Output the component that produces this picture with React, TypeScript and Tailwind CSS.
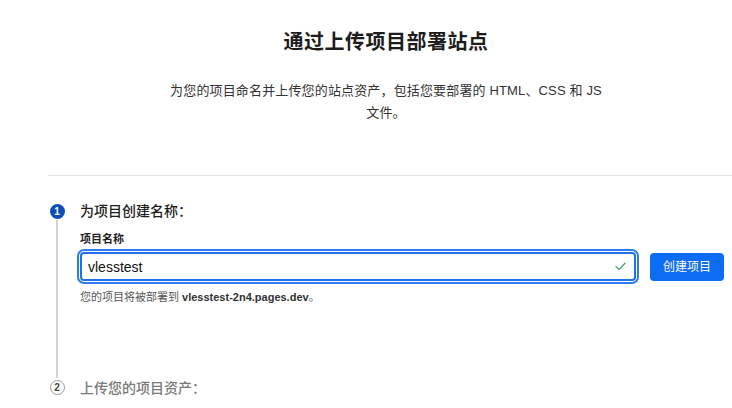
import { useState } from "react";

const font = {
  fontFamily: '"Liberation Sans", "Noto Sans CJK SC", sans-serif',
};

export default function App() {
  const [name, setName] = useState("vlesstest");

  return (
    <main
      className="w-[732px] h-[408px] overflow-hidden bg-white text-[#222]"
      style={font}
    >
      <div className="pl-[48px] pr-[8px] pt-[28px]">
        {/* header */}
        <div className="flex flex-col items-center text-center">
          <h1 className="text-[20px] leading-[28px] font-semibold tracking-[0.5px] text-[#1d1d1d]">
            通过上传项目部署站点
          </h1>
          <p className="mt-6 max-w-[444px] text-[13px] leading-[22px] tracking-[0.15px] text-[#333]">
            为您的项目命名并上传您的站点资产，包括您要部署的 HTML、CSS 和 JS 文件。
          </p>
        </div>

        <div className="mt-[51px] -mr-[8px] h-px bg-[#e3e3e3]"></div>

        {/* step 1 */}
        <div className="mt-[25px] flex">
          <div className="flex w-[18px] flex-col items-center">
            <div className="mt-[3px] flex h-[15px] w-[15px] items-center justify-center rounded-full bg-[#0d4fb8] text-[10px] font-bold text-white">
              1
            </div>
            <div className="mt-px w-[2px] flex-1 bg-[#d2d2d2]"></div>
          </div>
          <div className="ml-[14px] flex-1 pb-[73px]">
            <h2 className="text-[14px] leading-[20px] font-medium text-[#1d1d1d]">
              为项目创建名称：
            </h2>
            <label className="mt-[10px] block text-[11px] leading-[16px] font-semibold text-[#222]">
              项目名称
            </label>
            <div className="mt-[5px] flex items-center gap-[14px]">
              <div className="relative flex-1">
                <input
                  value={name}
                  onChange={(e) => setName(e.target.value)}
                  className="h-[29px] w-full rounded-[4px] border-2 border-[#1f6ff0] bg-white pl-[6px] pr-8 text-[14px] text-[#111] outline-none ring-2 ring-[#2d7cf4] ring-offset-1"
                  style={font}
                />
                <svg
                  className="absolute right-[10px] top-[10px]"
                  width="11"
                  height="9"
                  viewBox="0 0 11 9"
                  fill="none"
                >
                  <path
                    d="M1 4.6 L4 7.6 L10 1.2"
                    stroke="#3aa65b"
                    strokeWidth="1.3"
                    strokeLinecap="round"
                    strokeLinejoin="round"
                  />
                </svg>
              </div>
              <button className="h-[28px] w-[74px] rounded-[4px] bg-[#0c6cf4] text-[12px] text-white">
                创建项目
              </button>
            </div>
            <p className="mt-2 text-[11px] leading-[16px] text-[#555]">
              您的项目将被部署到{" "}
              <span className="font-bold text-[#333]">
                vlesstest-2n4.pages.dev
              </span>
              。
            </p>
          </div>
        </div>

        {/* step 2 */}
        <div className="flex">
          <div className="flex w-[18px] flex-col items-center">
            <div className="mt-[2px] flex h-[15px] w-[15px] items-center justify-center rounded-full border border-[#9a9a9a] bg-white text-[10px] font-bold text-[#444]">
              2
            </div>
          </div>
          <div className="ml-[14px] flex-1">
            <h2 className="text-[14px] leading-[20px] font-medium text-[#7a7a7a]">
              上传您的项目资产：
            </h2>
          </div>
        </div>
      </div>
    </main>
  );
}
